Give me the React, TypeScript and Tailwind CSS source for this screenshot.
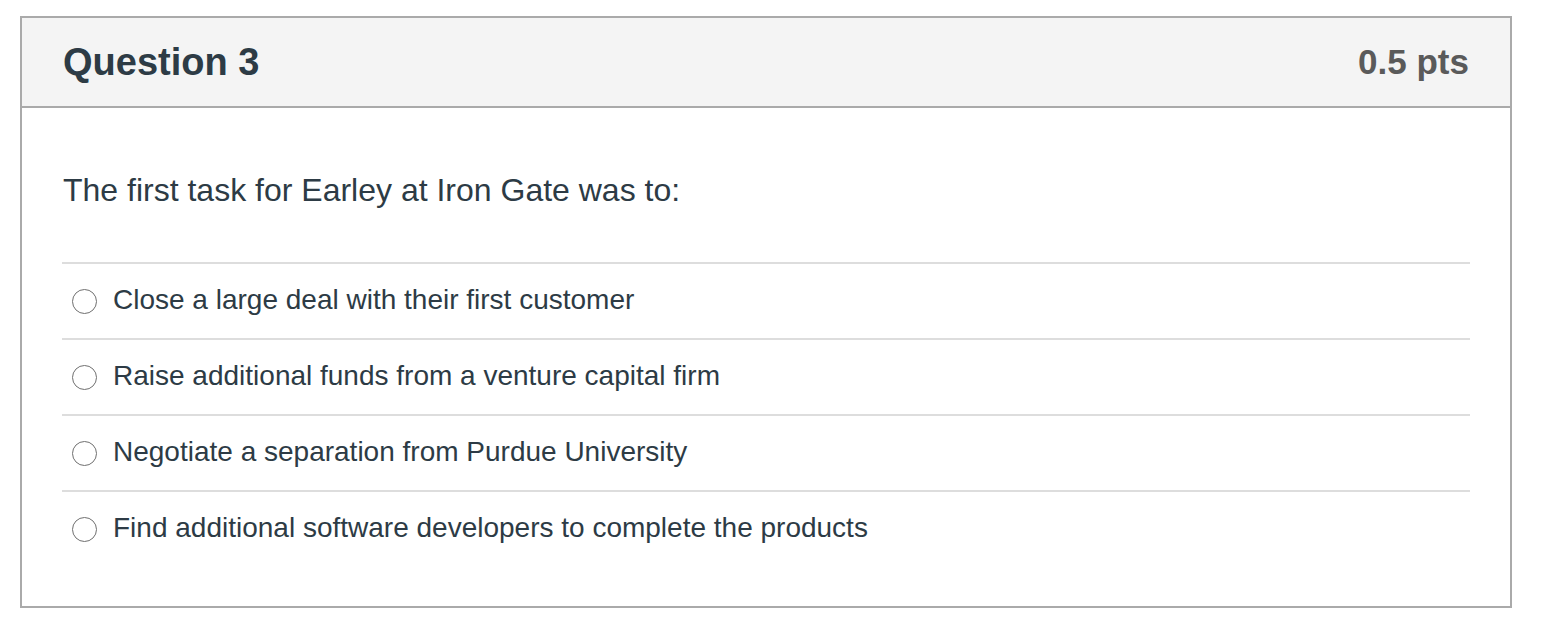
const options = [
  'Close a large deal with their first customer',
  'Raise additional funds from a venture capital firm',
  'Negotiate a separation from Purdue University',
  'Find additional software developers to complete the products',
]

export default function App() {
  return (
    <div className="min-h-screen bg-white pt-[16px] pl-[20px]" style={{ fontFamily: '"Liberation Sans", Arial, sans-serif' }}>
      <div className="w-[1492px] border-2 border-[#aaaaaa]">
        <div className="h-[90px] bg-[#f4f4f4] border-b-2 border-[#aaaaaa] flex items-center justify-between pl-[41px] pr-[41px]">
          <h2 className="text-[38px] font-bold text-[#2d3b45]">Question 3</h2>
          <span className="text-[35px] font-bold text-[#5a5a5a]">0.5 pts</span>
        </div>
        <div className="px-[40px] pt-[60px] pb-[40px] text-[#2d3b45]">
          <p className="text-[32px] leading-[44px] pl-[1px] mb-[50px]">The first task for Earley at Iron Gate was to:</p>
          {options.map(opt => (
            <label key={opt} className="flex items-center h-[76px] border-t-2 border-[#dddddd] pl-[10px] gap-[16px]">
              <span className="w-[25px] h-[25px] rounded-full border-[1.5px] border-[#6f6f6f] bg-white shrink-0" />
              <span className="text-[28px] -mt-[2px]">{opt}</span>
            </label>
          ))}
        </div>
      </div>
    </div>
  )
}
